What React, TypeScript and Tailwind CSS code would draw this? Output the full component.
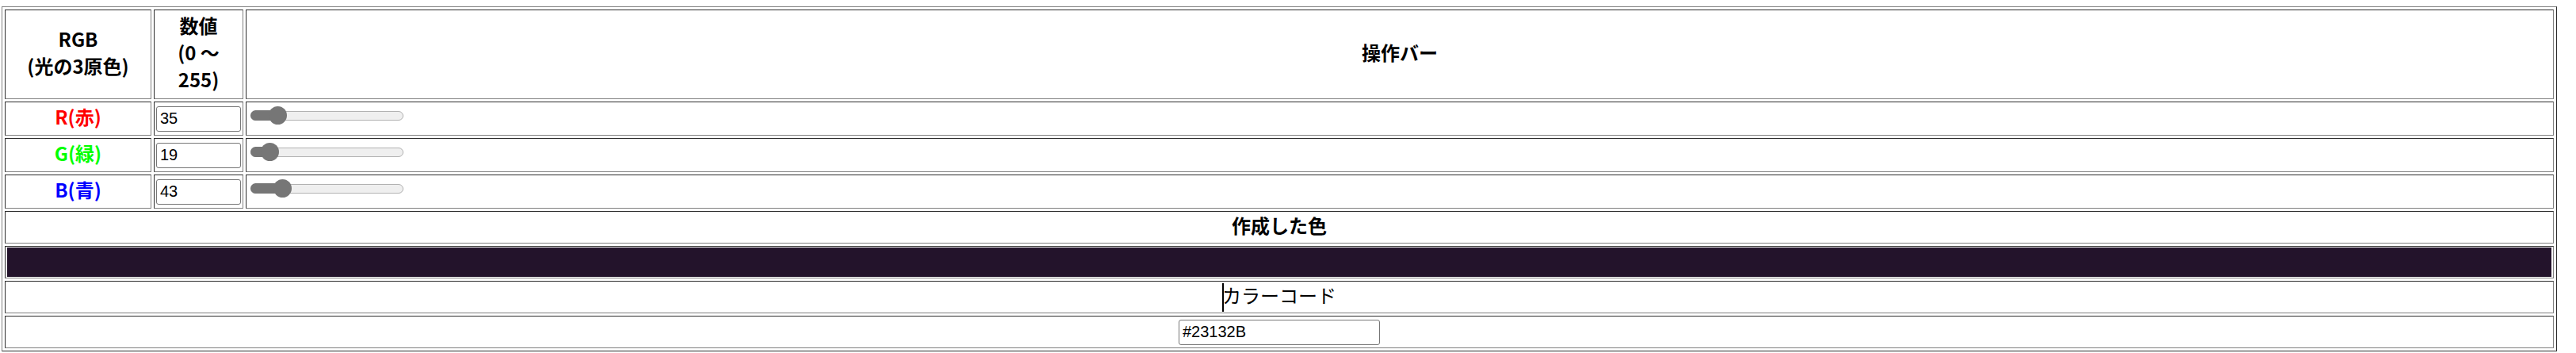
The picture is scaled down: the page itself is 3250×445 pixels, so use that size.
import React from "react";

const cell =
  "border border-t-[#2c2c2c] border-l-[#2c2c2c] border-r-[#808080] border-b-[#808080] bg-white";
const th =
  "font-['Noto_Sans_CJK_JP','Noto_Sans',sans-serif] font-bold text-[24px] leading-[34px] text-center pb-[6px]";
const inputCls =
  "h-[32px] border border-[#767676] rounded-[3px] px-[4px] text-[20px] font-['Liberation_Sans',Arial,sans-serif] text-black bg-white outline-none";

function Slider({ value }: { value: number }) {
  const left = (170 * value) / 255;
  return (
    <div className="relative w-[193px] h-[23px]">
      <div className="absolute left-0 right-0 top-[6px] h-[12px] rounded-full bg-[#efefef] border border-[#b2b2b2]" />
      <div
        className="absolute left-0 top-[5px] h-[13px] rounded-full bg-[#767676]"
        style={{ width: left + 12 }}
      />
      <div
        className="absolute top-0 h-[23px] w-[23px] rounded-full bg-[#767676]"
        style={{ left }}
      />
    </div>
  );
}

const rows = [
  { label: "R(赤)", color: "text-[#ff0000]", value: 35 },
  { label: "G(緑)", color: "text-[#00ff00]", value: 19 },
  { label: "B(青)", color: "text-[#0000ff]", value: 43 },
];

export default function App() {
  return (
    <div className="bg-white w-[3250px] h-[445px] pl-[2px] pt-[8px] text-black">
      <div className="grid grid-cols-[185px_113px_2912px] grid-rows-[113px_43px_43px_43px_41px_41px_41px_41px] gap-[3px] p-[3px] w-[3224px] border border-t-[#808080] border-l-[#808080] border-r-[#2c2c2c] border-b-[#2c2c2c]">
        <div className={`${cell} ${th} flex flex-col items-center justify-center`}>
          <span>RGB</span>
          <span>(光の3原色)</span>
        </div>
        <div className={`${cell} ${th} flex flex-col items-center justify-center`}>
          <span>数値</span>
          <span>(0 ～</span>
          <span>255)</span>
        </div>
        <div className={`${cell} ${th} flex items-center justify-center`}>操作バー</div>

        {rows.map((r) => (
          <React.Fragment key={r.label}>
            <div className={`${cell} ${th} flex items-center justify-center`}>
              <span className={r.color}>{r.label}</span>
            </div>
            <div className={`${cell} flex items-center pl-[2px]`}>
              <input readOnly value={String(r.value)} className={`${inputCls} w-[107px]`} />
            </div>
            <div className={`${cell} flex items-start pt-[5px] pl-[5px]`}>
              <Slider value={r.value} />
            </div>
          </React.Fragment>
        ))}

        <div className={`${cell} ${th} col-span-3 flex items-center justify-center`}>作成した色</div>
        <div className={`${cell} col-span-3 flex px-[2px] py-[1px]`}>
          <div className="flex-1 bg-[#23132B]" />
        </div>
        <div className={`${cell} col-span-3 flex items-center justify-center`}>
          <span className="relative -top-[3px] font-['Noto_Sans_CJK_JP','Noto_Sans',sans-serif] text-[24px] leading-[36px]">
            <span className="absolute left-0 top-[3px] w-[2px] h-[36px] bg-black" />
            カラーコード
          </span>
        </div>
        <div className={`${cell} col-span-3 flex items-center justify-center`}>
          <input readOnly value="#23132B" className={`${inputCls} w-[254px]`} />
        </div>
      </div>
    </div>
  );
}
